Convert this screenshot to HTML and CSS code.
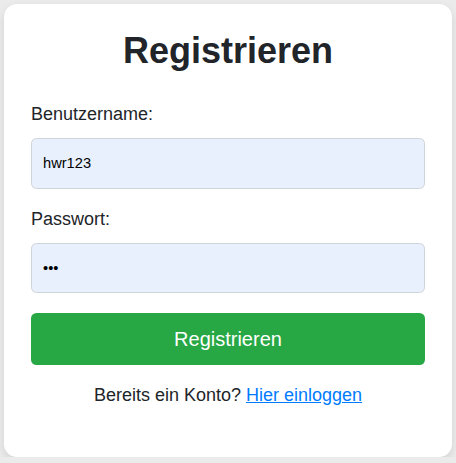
FILE: index.html
```html
<!DOCTYPE html>
<html lang="de">
<head>
<meta charset="utf-8">
<title>Registrieren</title>
<link rel="stylesheet" href="styles.css">
</head>
<body>
<div class="card">
  <h2 class="title">Registrieren</h2>
  <form class="form">
    <div class="group">
      <label class="label" for="user">Benutzername:</label>
      <input class="input" id="user" type="text" value="hwr123">
    </div>
    <div class="group">
      <label class="label" for="pw">Passwort:</label>
      <input class="input" id="pw" type="password" value="abc">
    </div>
    <button class="btn" type="button">Registrieren</button>
  </form>
  <p class="footer">Bereits ein Konto? <a class="link" href="#">Hier einloggen</a></p>
</div>
</body>
</html>
```
FILE: styles.css
```css
html, body {
  margin: 0;
  padding: 0;
}
body {
  background: #ebebeb;
  font-family: "Liberation Sans", Arial, sans-serif;
  color: #212529;
  padding-top: 4px;
}
.card {
  box-sizing: border-box;
  width: 448px;
  margin: 0 auto;
  background: #fff;
  border-radius: 13px;
  box-shadow: 0 4px 10px rgba(0, 0, 0, 0.1);
  padding: 27px 27px 27px;
}
.title {
  margin: 0 0 33px;
  font-size: 36px;
  line-height: 40px;
  font-weight: bold;
  text-align: center;
  color: #212529;
}
.form {
  display: flex;
  flex-direction: column;
}
.group {
  display: flex;
  flex-direction: column;
  margin-bottom: 20px;
}
.label {
  font-size: 18px;
  line-height: 20px;
  margin-bottom: 14px;
  color: #212529;
}
.input {
  box-sizing: border-box;
  height: 50.6px;
  width: 100%;
  margin: 0;
  padding: 0 11px;
  border: 1px solid #ced4da;
  border-radius: 5.5px;
  background: #e8f0fe;
  font-family: "Liberation Sans", Arial, sans-serif;
  font-size: 14.67px;
  color: #000;
  outline: none;
}
.btn {
  height: 52px;
  width: 100%;
  border: none;
  border-radius: 5.5px;
  background: #28a745;
  color: #fff;
  font-family: "Liberation Sans", Arial, sans-serif;
  font-size: 20px;
  padding: 0;
}
.footer {
  margin: 20px 0 25px;
  font-size: 18px;
  line-height: 20px;
  text-align: center;
  color: #212529;
}
.link {
  color: #007bff;
  text-decoration: underline;
}
```
